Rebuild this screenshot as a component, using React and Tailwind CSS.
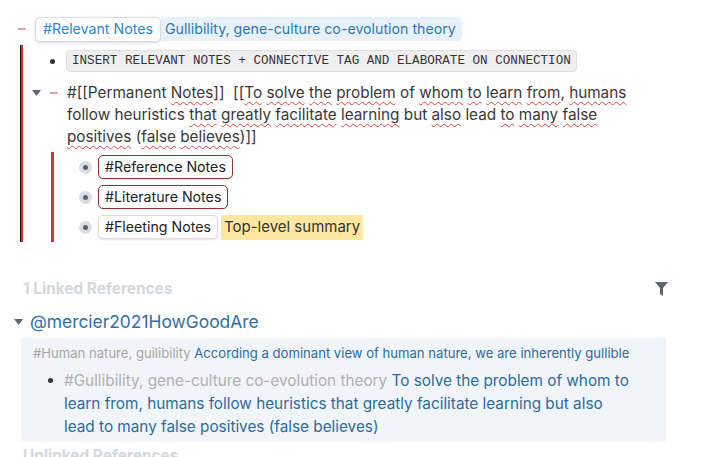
import React from "react";

// wavy spellcheck underline
function W({ children }) {
  return (
    <span className="underline decoration-wavy decoration-[#e0463c] decoration-1 underline-offset-[3px]">
      {children}
    </span>
  );
}

function Caret({ className = "" }) {
  return (
    <svg width="9" height="6" viewBox="0 0 9 6" className={className}>
      <path d="M0 0 L9 0 L4.5 6 Z" fill="#5f6770" />
    </svg>
  );
}

function Dash() {
  return <span className="block w-[8px] h-[2px] bg-[#d6a7b0]" />;
}

function HaloBullet() {
  return (
    <span className="w-[13px] h-[13px] rounded-full bg-[#d9dee4] flex items-center justify-center">
      <span className="w-[5px] h-[5px] rounded-full bg-[#5a636d]" />
    </span>
  );
}

function Pill({ children, tone }) {
  const border =
    tone === "dark" ? "border-[#8d3535]" : "border-[#ecd3da]";
  return (
    <span
      className={`inline-flex items-center h-[24px] px-[6px] rounded-[5px] border bg-white text-[#222] shadow-[0_1px_2px_rgba(0,0,0,0.12)] ${border}`}
    >
      {children}
    </span>
  );
}

export default function App() {
  return (
    <div
      className="w-[712px] h-[457px] overflow-hidden bg-white"
      style={{ fontFamily: "Inter, 'Noto Sans', sans-serif" }}
    >
      {/* block title row */}
      <div className="flex items-center h-[30px] mt-[14px] pl-[18px]">
        <Dash />
        <span className="ml-[9px] inline-flex items-center h-[25px] px-[7px] rounded-[5px] border border-[#d8dde2] bg-white text-[14.2px] text-[#2a86cf] shadow-[0_1px_3px_rgba(0,0,0,0.15)]">
          #Relevant Notes
        </span>
        <span className="inline-flex items-center h-[24px] pl-[4px] pr-[6px] rounded-r-[5px] bg-[#e9f1f8] text-[14.2px] text-[#2a78b6]">
          Gullibility, gene-culture co-evolution theory
        </span>
      </div>

      {/* children with left rule */}
      <div className="ml-[20px] mt-[1px] border-l border-l-[#1a1a1a] w-[640px]">
        <div className="border-l-2 border-l-[#d0302a] pt-[5px]">
          {/* code row */}
          <div className="flex items-center h-[22px]">
            <span className="ml-[27px] w-[5px] h-[5px] rounded-full bg-[#333]" />
            <span
              className="ml-[11px] px-[5px] h-[22px] inline-flex items-center rounded-[4px] border border-[#dedede] bg-[#efefef] text-[12.6px] text-[#333]"
              style={{ fontFamily: "'Liberation Mono', monospace" }}
            >
              INSERT RELEVANT NOTES + CONNECTIVE TAG AND ELABORATE ON CONNECTION
            </span>
          </div>

          {/* permanent notes row */}
          <div className="flex mt-[10px]">
            <div className="flex items-center h-[22px] w-[44px] shrink-0">
              <Caret className="ml-[9px]" />
              <span className="ml-[9px]">
                <Dash />
              </span>
            </div>
            <p className="text-[15.3px] leading-[22px] text-[#383838] w-[580px]">
              #[[Permanent <W>Notes</W>]]&nbsp;&nbsp;[[<W>To</W> <W>solve</W>{" "}
              <W>the</W> <W>problem</W> of <W>whom</W> <W>to</W> <W>learn</W>{" "}
              <W>from</W>, <W>humans</W> follow heuristics <W>that</W>{" "}
              <W>greatly</W> <W>facilitate</W> <W>learning</W> but <W>also</W>{" "}
              lead <W>to</W> <W>many</W> <W>false</W> <W>positives</W> (
              <W>false</W> <W>believes</W>)]]
            </p>
          </div>

          {/* nested children */}
          <div className="ml-[28px] mt-[4px] border-l-[3px] border-l-[#c23a35]">
            <div className="flex flex-col text-[14.2px]">
              <div className="flex items-center h-[30px]">
                <span className="ml-[25px]">
                  <HaloBullet />
                </span>
                <span className="ml-[6px]">
                  <Pill tone="dark">#Reference Notes</Pill>
                </span>
              </div>
              <div className="flex items-center h-[30px]">
                <span className="ml-[25px]">
                  <HaloBullet />
                </span>
                <span className="ml-[6px]">
                  <Pill tone="dark">#Literature Notes</Pill>
                </span>
              </div>
              <div className="flex items-center h-[30px]">
                <span className="ml-[25px]">
                  <HaloBullet />
                </span>
                <span className="ml-[6px] flex items-center">
                  <Pill tone="light">#Fleeting Notes</Pill>
                  <span className="ml-[3px] h-[25px] inline-flex items-center px-[3px] bg-[#fde7a0] text-[15px] text-[#333]">
                    Top-level summary
                  </span>
                </span>
              </div>
            </div>
          </div>
        </div>
      </div>

      {/* linked references */}
      <div className="mt-[36px] pl-[23px] pr-[44px] flex items-center justify-between h-[22px]">
        <span className="text-[15.4px] font-bold text-[#d3d8dd]">
          1 Linked References
        </span>
        <svg width="13" height="14" viewBox="0 0 13 14" className="-mt-[1px]">
          <path d="M0 0 H13 L8 6 V14 L5 12 V6 Z" fill="#5d6670" />
        </svg>
      </div>

      <div className="mt-[10px] flex items-center h-[24px] pl-[14px]">
        <Caret />
        <span className="ml-[7px] text-[17.4px] text-[#2f6ea6]">
          @mercier2021HowGoodAre
        </span>
      </div>

      <div className="ml-[21px] mt-[4px] w-[645px] bg-[#f1f5f9] pt-[6px] pb-[4px] pl-[12px]">
        <div className="text-[13.1px] leading-[18px]">
          <span className="text-[#a8a8a8]">#Human nature, guilibility</span>{" "}
          <span className="text-[#2b6b9f]">
            According a dominant view of human nature, we are inherently gullible
          </span>
        </div>
        <div className="flex mt-[7px]">
          <span className="mt-[9px] ml-[15px] w-[5px] h-[5px] rounded-full bg-[#333] shrink-0" />
          <p className="ml-[11px] text-[15.3px] leading-[23px] w-[568px]">
            <span className="text-[#b0b0b0]">
              #Gullibility, gene-culture co-evolution theory
            </span>{" "}
            <span className="text-[#2b6b9f]">
              To solve the problem of whom to learn from, humans follow
              heuristics that greatly facilitate learning but also lead to many
              false positives (false believes)
            </span>
          </p>
        </div>
      </div>

      <div className="mt-[3px] pl-[23px] text-[15.4px] font-bold leading-[22px] text-[#d3d8dd]">
        Unlinked References
      </div>
    </div>
  );
}
